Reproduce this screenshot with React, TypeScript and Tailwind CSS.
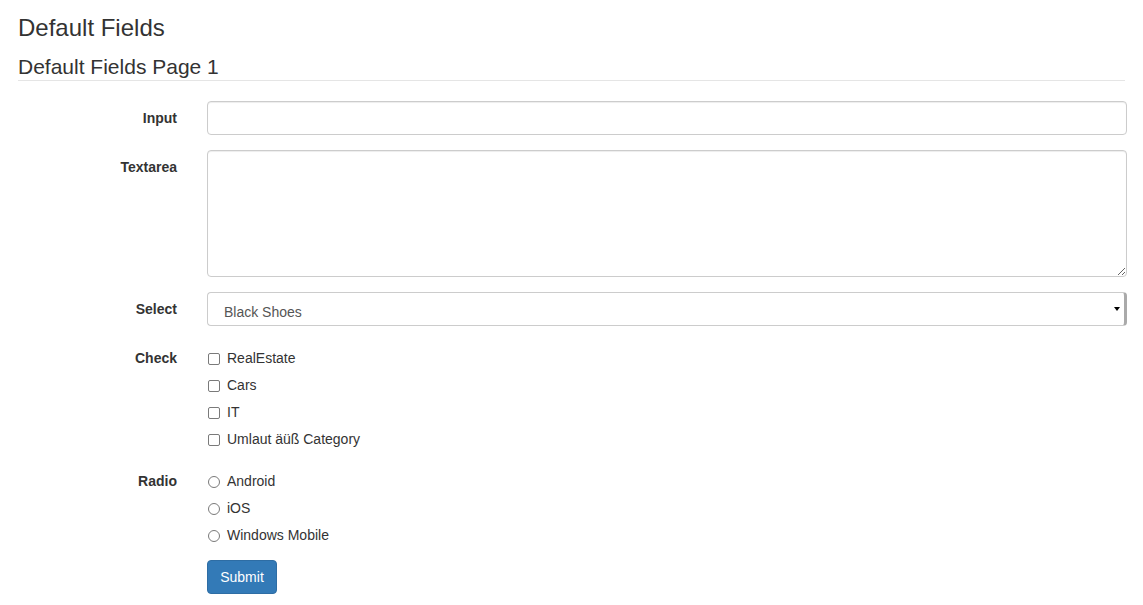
import { useState } from "react";

const checks = ["RealEstate", "Cars", "IT", "Umlaut äüß Category"];
const radios = ["Android", "iOS", "Windows Mobile"];

function FieldLabel({ text }: { text: string }) {
    return (
        <label className="pt-[7px] text-right font-bold leading-5 text-[#333]">
            {text}
        </label>
    );
}

export default function App() {
    const [choice, setChoice] = useState("");

    return (
        <div
            className="min-h-[605px] bg-white pl-[18px] pr-[16px] text-[14px] text-[#333]"
            style={{ fontFamily: '"Liberation Sans", Arial, sans-serif' }}
        >
            <h3 className="pt-[15px] text-[24px] leading-[26px] font-normal">Default Fields</h3>
            <div className="mt-[12px] mr-[2px] mb-[20px] border-b border-[#e5e5e5] text-[21px] leading-[27px]">
                Default Fields Page 1
            </div>

            <form className="flex flex-col" onSubmit={(e) => e.preventDefault()}>
                <div className="mb-[15px] grid grid-cols-[159px_1fr] gap-x-[30px]">
                    <FieldLabel text="Input" />
                    <input
                        type="text"
                        className="h-[34px] rounded-[4px] border border-[#ccc] px-3 shadow-[inset_0_1px_1px_rgba(0,0,0,0.075)] outline-none"
                    />
                </div>

                <div className="mb-[15px] grid grid-cols-[159px_1fr] gap-x-[30px]">
                    <FieldLabel text="Textarea" />
                    <textarea className="block h-[127px] rounded-[4px] border border-[#ccc] px-3 py-1.5 shadow-[inset_0_1px_1px_rgba(0,0,0,0.075)] outline-none" />
                </div>

                <div className="mb-[15px] grid grid-cols-[159px_1fr] gap-x-[30px]">
                    <FieldLabel text="Select" />
                    <div className="relative">
                        <select className="h-[34px] w-full appearance-none rounded-[4px] border border-[#ccc] border-r-[3px] border-r-[#aaa] bg-white pl-[16px] pt-[6px] text-[#555] outline-none">
                            <option>Black Shoes</option>
                            <option>White Shoes</option>
                        </select>
                        <span className="pointer-events-none absolute right-[7px] top-[15px] h-0 w-0 border-x-[3px] border-t-[4px] border-x-transparent border-t-black" />
                    </div>
                </div>

                <div className="mb-[11px] grid grid-cols-[159px_1fr] gap-x-[30px]">
                    <FieldLabel text="Check" />
                    <div className="flex flex-col pt-[4px]">
                        {checks.map((c) => (
                            <label key={c} className="flex h-[27px] items-center">
                                <input
                                    type="checkbox"
                                    className="ml-[1px] mr-[7px] h-[12px] w-[12px] appearance-none rounded-[2px] border border-[#7a7a7a] bg-white checked:bg-[#337ab7]"
                                />
                                {c}
                            </label>
                        ))}
                    </div>
                </div>

                <div className="mb-[11px] grid grid-cols-[159px_1fr] gap-x-[30px]">
                    <FieldLabel text="Radio" />
                    <div className="flex flex-col pt-[4px]">
                        {radios.map((r) => (
                            <label key={r} className="flex h-[27px] items-center">
                                <input
                                    type="radio"
                                    name="platform"
                                    checked={choice === r}
                                    onChange={() => setChoice(r)}
                                    className="ml-[1px] mr-[7px] h-[12px] w-[12px] appearance-none rounded-full border border-[#7a7a7a] bg-white checked:border-[4px] checked:border-[#337ab7]"
                                />
                                {r}
                            </label>
                        ))}
                    </div>
                </div>

                <div className="grid grid-cols-[159px_1fr] gap-x-[30px]">
                    <div />
                    <div>
                        <button
                            type="submit"
                            className="h-[34px] w-[70px] rounded-[4px] border border-[#2e6da4] bg-[#337ab7] text-white"
                        >
                            Submit
                        </button>
                    </div>
                </div>
            </form>
        </div>
    );
}
